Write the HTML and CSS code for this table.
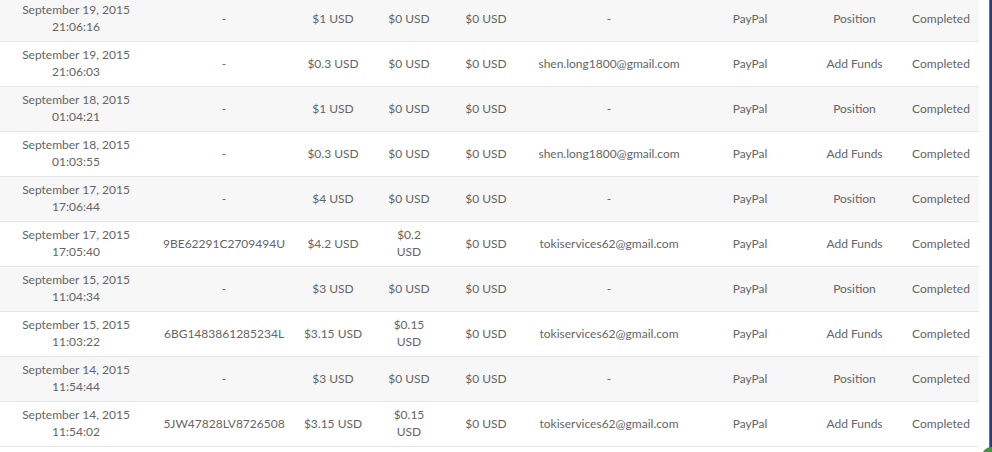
FILE: index.html
```html
<!DOCTYPE html>
<html>
<head>
<meta charset="utf-8">
<link rel="stylesheet" href="styles.css">
</head>
<body>
<div class="page">
  <div class="main">
    <table class="history">
      <colgroup>
        <col class="c-date"><col class="c-txn"><col class="c-amt"><col class="c-fee"><col class="c-net"><col class="c-email"><col class="c-method"><col class="c-type"><col class="c-status">
      </colgroup>
      <tbody>
        <tr><td>September 19, 2015<br>21:06:16</td><td>-</td><td>$1 USD</td><td class="fee">$0 USD</td><td>$0 USD</td><td>-</td><td>PayPal</td><td>Position</td><td>Completed</td></tr>
        <tr><td>September 19, 2015<br>21:06:03</td><td>-</td><td>$0.3 USD</td><td class="fee">$0 USD</td><td>$0 USD</td><td>shen.long1800@gmail.com</td><td>PayPal</td><td>Add Funds</td><td>Completed</td></tr>
        <tr><td>September 18, 2015<br>01:04:21</td><td>-</td><td>$1 USD</td><td class="fee">$0 USD</td><td>$0 USD</td><td>-</td><td>PayPal</td><td>Position</td><td>Completed</td></tr>
        <tr><td>September 18, 2015<br>01:03:55</td><td>-</td><td>$0.3 USD</td><td class="fee">$0 USD</td><td>$0 USD</td><td>shen.long1800@gmail.com</td><td>PayPal</td><td>Add Funds</td><td>Completed</td></tr>
        <tr><td>September 17, 2015<br>17:06:44</td><td>-</td><td>$4 USD</td><td class="fee">$0 USD</td><td>$0 USD</td><td>-</td><td>PayPal</td><td>Position</td><td>Completed</td></tr>
        <tr><td>September 17, 2015<br>17:05:40</td><td>9BE62291C2709494U</td><td>$4.2 USD</td><td class="fee">$0.2 USD</td><td>$0 USD</td><td>tokiservices62@gmail.com</td><td>PayPal</td><td>Add Funds</td><td>Completed</td></tr>
        <tr><td>September 15, 2015<br>11:04:34</td><td>-</td><td>$3 USD</td><td class="fee">$0 USD</td><td>$0 USD</td><td>-</td><td>PayPal</td><td>Position</td><td>Completed</td></tr>
        <tr><td>September 15, 2015<br>11:03:22</td><td>6BG1483861285234L</td><td>$3.15 USD</td><td class="fee">$0.15 USD</td><td>$0 USD</td><td>tokiservices62@gmail.com</td><td>PayPal</td><td>Add Funds</td><td>Completed</td></tr>
        <tr><td>September 14, 2015<br>11:54:44</td><td>-</td><td>$3 USD</td><td class="fee">$0 USD</td><td>$0 USD</td><td>-</td><td>PayPal</td><td>Position</td><td>Completed</td></tr>
        <tr><td>September 14, 2015<br>11:54:02</td><td>5JW47828LV8726508</td><td>$3.15 USD</td><td class="fee">$0.15 USD</td><td>$0 USD</td><td>tokiservices62@gmail.com</td><td>PayPal</td><td>Add Funds</td><td>Completed</td></tr>
      </tbody>
    </table>
  </div>
  <div class="sidebar-edge"></div>
</div>
<div class="chat-bubble"></div>
</body>
</html>
```
FILE: styles.css
```css
html, body {
  margin: 0;
  padding: 0;
  background: #fff;
  overflow: hidden;
}
body {
  width: 992px;
  height: 452px;
  position: relative;
  font-family: Lato, "Open Sans", sans-serif;
  font-size: 12px;
  color: #656565;
}
.page {
  display: flex;
  height: 452px;
}
.main {
  width: 979px;
  flex: none;
  margin-top: -4px;
}
.sidebar-edge {
  margin-left: 10px;
  width: 3px;
  background: #1d3f8c;
  border-left: 1px solid #5a74b0;
  box-sizing: border-box;
}
.history {
  width: 979px;
  border-collapse: collapse;
  table-layout: fixed;
}
.history td {
  border-top: 1px solid #e6e6e6;
  padding: 4px 4px 6px;
  line-height: 17px;
  height: 34px;
  text-align: center;
  vertical-align: middle;
}
.history tr:nth-child(odd) td {
  background: #f7f7f7;
}
.history tr:last-child td {
  border-bottom: 1px solid #e6e6e6;
}
.history td.fee {
  padding: 4px 17px 6px;
}
.c-date { width: 152px; }
.c-txn { width: 144px; }
.c-amt { width: 74px; }
.c-fee { width: 78px; }
.c-net { width: 76px; }
.c-email { width: 170px; }
.c-method { width: 112px; }
.c-type { width: 97px; }
.c-status { width: 76px; }
.chat-bubble {
  position: absolute;
  left: 982px;
  top: 447px;
  width: 26px;
  height: 18px;
  border-radius: 9px;
  background: #3c9a3c;
}
```
